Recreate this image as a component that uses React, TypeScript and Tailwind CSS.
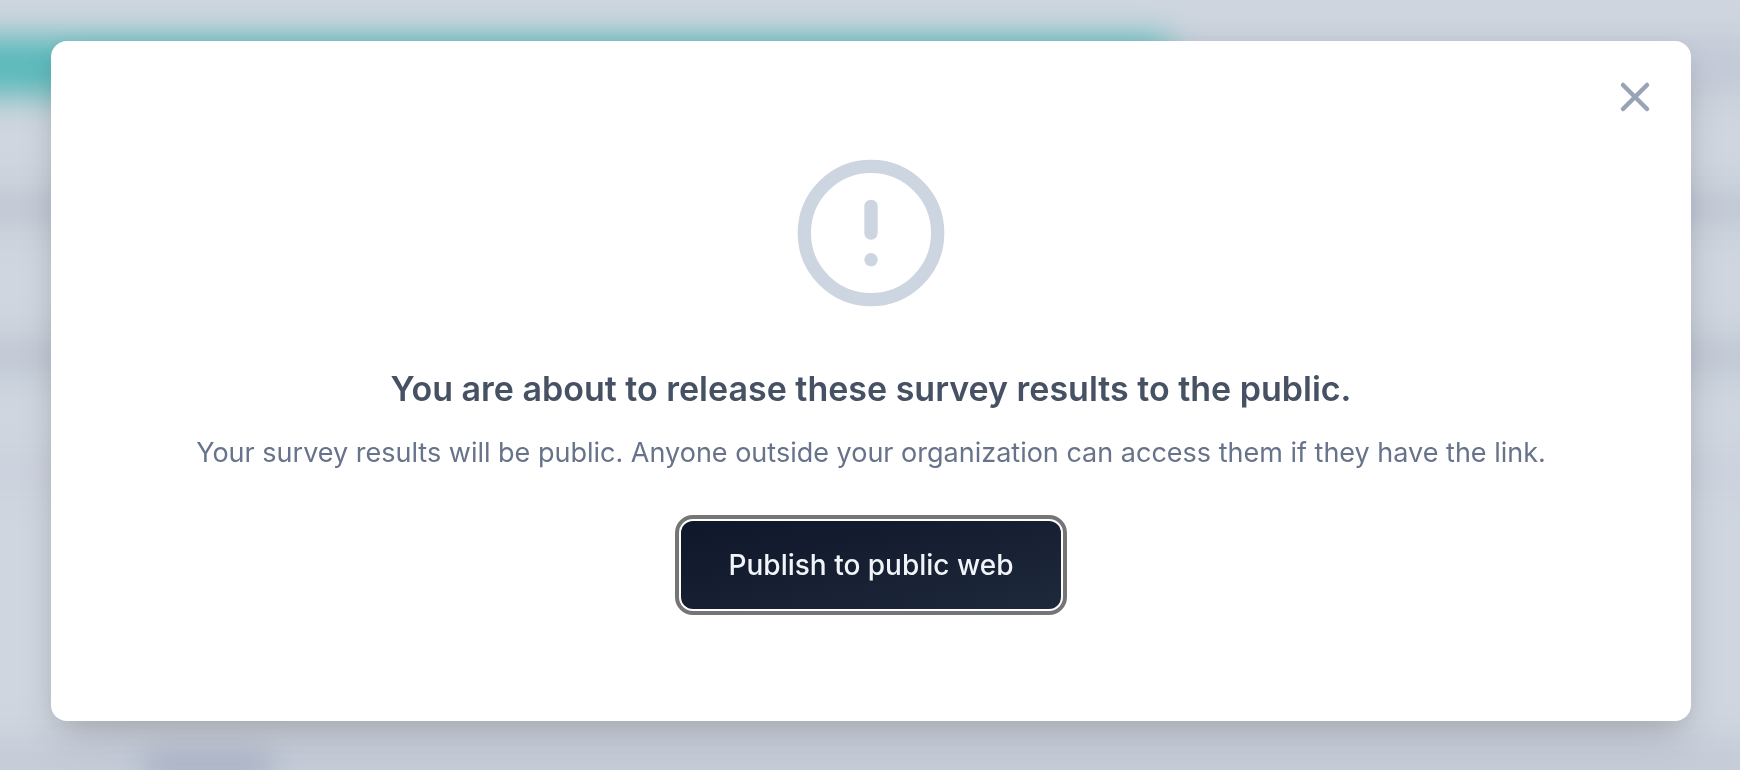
import { CircleAlert, X } from "lucide-react";

function BlurredPage() {
  return (
    <div
      aria-hidden="true"
      className="fixed inset-0 overflow-hidden bg-[#cfd6df]"
    >
      <div className="-mx-16 flex h-full flex-col blur-[16px]">
        <div className="mt-9 flex h-15 shrink-0">
          <div className="w-[66%] bg-[#5ab9ba]" />
          <div className="grow bg-[#c3cad7]" />
        </div>
        <div className="mt-23 h-10 shrink-0 bg-[#c0c8d5]" />
        <div className="mt-27 h-10 shrink-0 bg-[#c0c8d5]" />
        <div className="mt-20 h-8 shrink-0 bg-[#cbd1dd]" />
        <div className="-mb-4 mt-auto h-12 shrink-0 bg-[#c4cbd8] pl-52">
          <div className="mt-4 h-8 w-32 bg-[#a5aec2]" />
        </div>
      </div>
    </div>
  );
}

export default function App() {
  return (
    <div className="font-['Inter',sans-serif]">
      <BlurredPage />
      <div className="relative pt-[41px] pr-[49px] pb-[49px] pl-[51px]">
        <div
          role="dialog"
          aria-modal="true"
          aria-labelledby="publish-title"
          aria-describedby="publish-description"
          className="relative flex flex-col items-center rounded-2xl bg-white px-12 pt-28 pb-28 text-center shadow-[0_20px_40px_-8px_rgba(0,0,0,0.18),0_4px_24px_rgba(0,0,0,0.06)]"
        >
          <button
            type="button"
            aria-label="Close"
            className="absolute top-8 right-8 text-[#98a3b6]"
          >
            <X size={48} strokeWidth={2.25} />
          </button>
          <CircleAlert size={160} strokeWidth={2} className="text-[#cdd5e1]" />
          <h1
            id="publish-title"
            className="mt-12 text-[34px] leading-[56px] font-semibold text-[#475164]"
          >
            You are about to release these survey results to the public.
          </h1>
          <p
            id="publish-description"
            className="mt-4 text-[27px] leading-10 text-[#67738a]"
          >
            Your survey results will be public. Anyone outside your organization
            can access them if they have the link.
          </p>
          <button
            type="button"
            className="mt-12 h-[88px] rounded-xl bg-linear-to-br from-[#0f172a] to-[#1e293b] px-12 text-[28px] leading-10 font-medium text-slate-100 outline-4 outline-offset-2 outline-[#757575]"
          >
            Publish to public web
          </button>
        </div>
      </div>
    </div>
  );
}
